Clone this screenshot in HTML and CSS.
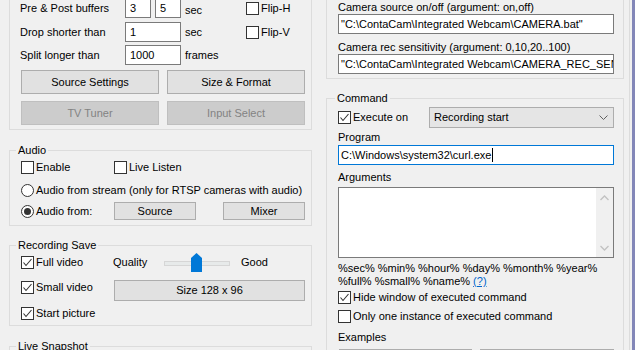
FILE: index.html
```html
<!DOCTYPE html>
<html>
<head>
<meta charset="utf-8">
<title>Camera settings</title>
<link rel="stylesheet" href="styles.css">
</head>
<body>
<div class="window">
  <div class="dialog">
    <div class="col col-left">
      <div class="group g-video">
        <div class="vrow">
          <span class="lbl">Pre &amp; Post buffers</span>
          <span class="pair"><span class="edit e-small">3</span><span class="edit e-small">5</span></span>
          <span class="unit unit-low">sec</span>
          <span class="chk"><span class="box"></span><span>Flip-H</span></span>
        </div>
        <div class="vrow r2">
          <span class="lbl">Drop shorter than</span>
          <span class="edit e-wide">1</span>
          <span class="unit">sec</span>
          <span class="chk"><span class="box"></span><span>Flip-V</span></span>
        </div>
        <div class="vrow r3">
          <span class="lbl">Split longer than</span>
          <span class="edit e-wide">1000</span>
          <span class="unit">frames</span>
        </div>
        <div class="brow b1">
          <span class="btn w138">Source Settings</span>
          <span class="btn w138">Size &amp; Format</span>
        </div>
        <div class="brow b2">
          <span class="btn w138 disabled">TV Tuner</span>
          <span class="btn w138 disabled">Input Select</span>
        </div>
      </div>

      <div class="group g-audio">
        <span class="legend">Audio</span>
        <div class="arow ra">
          <span class="chk w93"><span class="box"></span><span>Enable</span></span>
          <span class="chk"><span class="box"></span><span>Live Listen</span></span>
        </div>
        <div class="arow rb">
          <span class="chk"><svg class="radio" width="13" height="13" viewBox="0 0 13 13"><circle cx="6.5" cy="6.5" r="6" fill="#fff" stroke="#333"/></svg><span>Audio from stream (only for RTSP cameras with audio)</span></span>
        </div>
        <div class="arow rc">
          <span class="chk w93"><svg class="radio" width="13" height="13" viewBox="0 0 13 13"><circle cx="6.5" cy="6.5" r="6" fill="#fff" stroke="#333"/><circle cx="6.5" cy="6.5" r="3.5" fill="#333"/></svg><span>Audio from:</span></span>
          <span class="btn small">Source</span>
          <span class="btn small mixer">Mixer</span>
        </div>
      </div>

      <div class="group g-rec">
        <span class="legend">Recording Save</span>
        <div class="arow r1">
          <span class="chk w92"><span class="box"><svg width="11" height="11" viewBox="0 0 11 11"><polyline points="1.5,5.5 4,8.5 9.5,2" fill="none" stroke="#333" stroke-width="1.1"/></svg></span><span>Full video</span></span>
          <span class="quality">Quality</span>
          <svg class="slider" width="66" height="20" viewBox="0 0 66 20"><rect x="0.5" y="9.5" width="65" height="4" fill="#e7eaea" stroke="#d6d6d6"/><path d="M27 6 L32.5 1 L38 6 L38 20 L27 20 Z" fill="#0078d7"/></svg>
          <span class="good">Good</span>
        </div>
        <div class="arow r2x">
          <span class="chk w93 up"><span class="box"><svg width="11" height="11" viewBox="0 0 11 11"><polyline points="1.5,5.5 4,8.5 9.5,2" fill="none" stroke="#333" stroke-width="1.1"/></svg></span><span>Small video</span></span>
          <span class="btn size">Size 128 x 96</span>
        </div>
        <div class="arow r3x">
          <span class="chk"><span class="box"><svg width="11" height="11" viewBox="0 0 11 11"><polyline points="1.5,5.5 4,8.5 9.5,2" fill="none" stroke="#333" stroke-width="1.1"/></svg></span><span>Start picture</span></span>
        </div>
      </div>

      <div class="group g-snap">
        <span class="legend">Live Snapshot</span>
      </div>
    </div>

    <div class="col col-right">
      <div class="group g-cam">
        <div class="line">Camera source on/off (argument: on,off)</div>
        <div class="edit e-full ro">"C:\ContaCam\Integrated Webcam\CAMERA.bat"</div>
        <div class="line l2">Camera rec sensitivity (argument: 0,10,20..100)</div>
        <div class="edit e-full ro">"C:\ContaCam\Integrated Webcam\CAMERA_REC_SENSITIVITY.bat"</div>
      </div>

      <div class="group g-cmd">
        <span class="legend">Command</span>
        <div class="arow exec">
          <span class="chk w91"><span class="box"><svg width="11" height="11" viewBox="0 0 11 11"><polyline points="1.5,5.5 4,8.5 9.5,2" fill="none" stroke="#333" stroke-width="1.1"/></svg></span><span>Execute on</span></span>
          <span class="combo"><span>Recording start</span><svg width="9" height="5" viewBox="0 0 9 5"><polyline points="0.5,0.5 4.5,4.5 8.5,0.5" fill="none" stroke="#606060"/></svg></span>
        </div>
        <div class="line prog">Program</div>
        <div class="edit e-full focus">C:\Windows\system32\curl.exe<span class="caret"></span></div>
        <div class="line args">Arguments</div>
        <div class="textarea">
          <div class="ta-body"></div>
          <div class="vscroll">
            <svg width="9" height="6" viewBox="0 0 9 6"><polyline points="0.5,5 4.5,1 8.5,5" fill="none" stroke="#c2c2c2" stroke-width="1.3"/></svg>
            <svg width="9" height="6" viewBox="0 0 9 6"><polyline points="0.5,1 4.5,5 8.5,1" fill="none" stroke="#c2c2c2" stroke-width="1.3"/></svg>
          </div>
        </div>
        <div class="vars">%sec% %min% %hour% %day% %month% %year%<br>%full% %small% %name% <span class="link">(?)</span></div>
        <div class="arow opt">
          <span class="chk"><span class="box"><svg width="11" height="11" viewBox="0 0 11 11"><polyline points="1.5,5.5 4,8.5 9.5,2" fill="none" stroke="#333" stroke-width="1.1"/></svg></span><span>Hide window of executed command</span></span>
        </div>
        <div class="arow opt">
          <span class="chk"><span class="box"></span><span>Only one instance of executed command</span></span>
        </div>
        <div class="line examples">Examples</div>
        <div class="brow ex">
          <span class="btn exl"></span>
          <span class="btn exr"></span>
        </div>
      </div>
    </div>
  </div>
  <div class="edge"><span class="edge-line"></span><span class="edge-bar"></span></div>
</div>
</body>
</html>
```
FILE: styles.css
```css
* { box-sizing: border-box; }
html, body { margin: 0; padding: 0; }
body {
  width: 635px;
  height: 350px;
  overflow: hidden;
  background: #f0f0f0;
  font-family: "Liberation Sans", Arial, sans-serif;
  font-size: 11px;
  line-height: 13px;
  color: #000;
}
.window { display: flex; width: 635px; height: 350px; overflow: hidden; }
.dialog {
  display: flex;
  align-items: flex-start;
  gap: 14px;
  padding-left: 9px;
  margin-top: -20px;
  width: 624px;
  flex: none;
}
.col { display: flex; flex-direction: column; flex: none; }
.col-left { width: 303px; }
.col-right { width: 298px; }

.group { border: 1px solid #dcdcdc; }
.legend {
  display: block;
  width: fit-content;
  margin: -7px 0 0 -5px;
  padding: 0 2px;
  background: #f0f0f0;
  line-height: 13px;
  white-space: nowrap;
}
.g-snap .legend { margin-left: 6px; }
.g-cmd .legend { margin-left: -3px; }

/* generic controls */
.edit {
  height: 20px;
  border: 1px solid #7a7a7a;
  background: #fff;
  padding-left: 4px;
  display: flex;
  align-items: center;
  white-space: nowrap;
  overflow: hidden;
}
.btn {
  display: flex;
  align-items: center;
  justify-content: center;
  border: 1px solid #adadad;
  background: #e1e1e1;
  white-space: nowrap;
  flex: none;
}
.btn.disabled { background: #cccccc; border-color: #bfbfbf; color: #838383; }
.chk { display: flex; align-items: center; gap: 2px; white-space: nowrap; flex: none; }
.box {
  width: 13px;
  height: 13px;
  border: 1px solid #333;
  background: #fff;
  flex: none;
  display: block;
}
.box svg { display: block; }
.radio { display: block; flex: none; }
.w91 { width: 91px; }
.w92 { width: 92px; }
.w93 { width: 93px; }

/* video group */
.g-video { padding: 17px 0 4px 10px; }
.vrow {
  display: grid;
  grid-template-columns: 105px 56px 65px auto;
  align-items: center;
  height: 20px;
}
.vrow.r2 { margin-top: 4px; }
.vrow.r3 { margin-top: 3px; }
.pair { display: flex; gap: 4px; }
.e-small { width: 26px; }
.e-wide { width: 56px; }
.unit { padding-left: 4px; }
.unit-low { padding-top: 5px; }
.brow { display: flex; gap: 8px; margin-left: 1px; }
.w138 { width: 138px; height: 24px; }
.brow.b1 { margin-top: 5px; }
.brow.b2 { margin-top: 7px; }

/* audio group */
.g-audio { margin-top: 20px; padding: 0 0 4px 11px; }
.arow { display: flex; align-items: center; height: 20px; }
.ra { margin-top: 0; }
.rb { margin-top: 3px; }
.rc { margin-top: 1px; }
.btn.small { width: 82px; height: 18px; }
.btn.mixer { margin-left: 27px; }

/* recording save */
.g-rec { margin-top: 19px; padding: 0 0 2px 11px; }
.quality { width: 51px; flex: none; }
.slider { display: block; flex: none; }
.good { margin-left: 11px; }
.r2x { margin-top: 8px; height: 21px; }
.chk.up { margin-top: -6px; }
.btn.size { width: 191px; height: 21px; }
.r3x { margin-top: 2px; }

.g-snap { margin-top: 20px; height: 40px; }

/* right column */
.g-cam { padding: 20px 9px 4px 11px; }
.line { height: 13px; white-space: nowrap; }
.line.l2 { margin-top: 7px; }
.e-full { width: 276px; padding-left: 2px; }
.g-cam .e-full { height: 20px; background: #fff; }

.g-cmd { margin-top: 19px; padding: 0 9px 0 11px; height: 300px; }
.exec { margin-top: 2px; }
.combo {
  width: 185px;
  height: 21px;
  border: 1px solid #adadad;
  background: #e5e5e5;
  display: flex;
  align-items: center;
  justify-content: space-between;
  padding: 0 5px 0 4px;
  flex: none;
}
.combo svg { display: block; }
.line.prog { margin-top: 4px; }
.focus { border-color: #0078d7; margin-top: 1px; }
.caret { display: block; width: 1px; height: 14px; background: #000; margin-left: 1px; }
.line.args { margin-top: 6px; }
.textarea {
  margin-top: 3px;
  width: 276px;
  height: 71px;
  border: 1px solid #7a7a7a;
  background: #fff;
  display: flex;
  justify-content: space-between;
}
.ta-body { flex: 1; }
.vscroll {
  width: 17px;
  background: #f0f0f0;
  display: flex;
  flex-direction: column;
  align-items: center;
  justify-content: space-between;
  padding: 7px 0 6px;
}
.vscroll svg { display: block; }
.vars { margin-top: 4px; line-height: 13px; white-space: nowrap; }
.link { color: #0066cc; text-decoration: underline; }
.opt { height: 19px; }
.line.examples { margin-top: 5px; }
.brow.ex { margin-top: 5px; gap: 8px; }
.exl { width: 133px; height: 23px; }
.exr { width: 134px; height: 23px; }

/* window edge */
.edge { flex: none; width: 11px; display: flex; justify-content: flex-end; }
.edge-line { width: 1px; background: #dcdcdc; margin-right: 2px; }
.edge-bar { width: 3px; background: #8387b8; }
```
